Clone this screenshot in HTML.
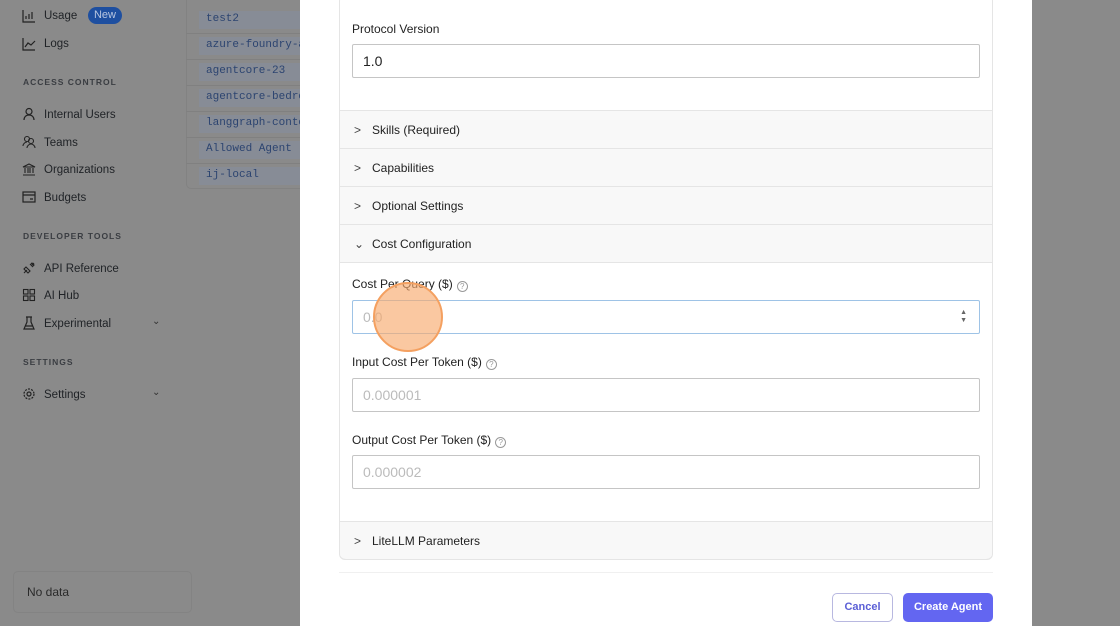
<!DOCTYPE html><html><head><meta charset="utf-8"><style>
*{box-sizing:border-box;margin:0;padding:0}
body{width:1120px;height:626px;overflow:hidden;position:relative;background:#8a8a8a;font-family:"Liberation Sans",sans-serif}
.a{position:absolute}
.nav{font-size:11.5px;color:#1f2226;left:44px;margin-top:1px}
.ic{left:22px;width:14px;height:14px}
.sec{font-size:8.5px;color:#3a3d42;letter-spacing:1px;left:23px;font-weight:bold}
.chip{left:199px;height:18px;background:#878c96;color:#2c4470;font-family:"Liberation Mono",monospace;font-size:11px;padding:2px 7px;width:110px;white-space:nowrap;overflow:hidden}
.rl{left:186px;width:114px;height:1px;background:#808080}
.lbl{font-size:12px;color:#222;left:352px}
.inp{left:352px;width:628px;border:1px solid #c5c5c5;border-radius:2px;background:#fff;font-size:14px;padding-left:10px;color:#bbb;display:flex;align-items:center}
.row{left:340px;width:652px;height:38px;background:#f8f8f8;border-top:1px solid #e5e5e5;font-size:12px;color:#222;padding-left:32px;line-height:38px}
.chev{position:absolute;left:14px;top:0;font-size:12px;color:#444}
.q{display:inline-block;width:11px;height:11px;border:1px solid #999;border-radius:50%;font-size:8px;text-align:center;line-height:9px;color:#999;vertical-align:-1px;margin-left:4px}
</style></head><body>
<svg class="a ic" style="top:9px" viewBox="0 0 14 14" fill="none" stroke="#222" stroke-width="1.2"><path d="M1 1v12h12M4 10V7M7 10V5M10 10V3"/></svg>
<div class="a nav" style="top:9px">Usage</div>
<div class="a" style="left:88px;top:7px;width:34px;height:17px;border-radius:9px;background:#1e4fa0;color:#b8c6e0;font-size:11px;text-align:center;line-height:17px">New</div>
<svg class="a ic" style="top:37px" viewBox="0 0 14 14" fill="none" stroke="#222" stroke-width="1.2"><path d="M1 1v12h12M3 10l3-4 3 2 4-4"/></svg>
<div class="a nav" style="top:37px">Logs</div>
<div class="a sec" style="top:77px">ACCESS CONTROL</div>
<svg class="a ic" style="top:107px" viewBox="0 0 14 14" fill="none" stroke="#222" stroke-width="1.2"><circle cx="7" cy="4.5" r="3"/><path d="M2 13c0-3 2-5 5-5s5 2 5 5"/></svg>
<div class="a nav" style="top:108px">Internal Users</div>
<svg class="a ic" style="top:135px" viewBox="0 0 14 14" fill="none" stroke="#222" stroke-width="1.1"><circle cx="5" cy="4" r="2.5"/><circle cx="9" cy="6" r="2.5"/><path d="M1 11c0-2 2-4 4-4M5 13c0-2 2-4 4-4s4 2 4 4"/></svg>
<div class="a nav" style="top:136px">Teams</div>
<svg class="a ic" style="top:162px" viewBox="0 0 14 14" fill="none" stroke="#222" stroke-width="1.1"><path d="M1 5l6-3 6 3zM3 6v5M6 6v5M8 6v5M11 6v5M1 13h12"/></svg>
<div class="a nav" style="top:163px">Organizations</div>
<svg class="a ic" style="top:190px" viewBox="0 0 14 14" fill="none" stroke="#222" stroke-width="1.2"><rect x="1" y="2" width="12" height="10"/><path d="M1 5h12M8 9h3"/></svg>
<div class="a nav" style="top:191px">Budgets</div>
<div class="a sec" style="top:231px">DEVELOPER TOOLS</div>
<svg class="a ic" style="top:261px" viewBox="0 0 14 14" fill="none" stroke="#222" stroke-width="1.1"><path d="M2 12l3-3M12 2L9 5M4 6l4 4-2 2-4-4zM8 4l2-2 2 2-2 2"/></svg>
<div class="a nav" style="top:262px">API Reference</div>
<svg class="a ic" style="top:288px" viewBox="0 0 14 14" fill="none" stroke="#222" stroke-width="1.1"><rect x="1.5" y="1.5" width="4.5" height="4.5"/><rect x="8" y="1.5" width="4.5" height="4.5"/><rect x="1.5" y="8" width="4.5" height="4.5"/><rect x="8" y="8" width="4.5" height="4.5"/></svg>
<div class="a nav" style="top:289px">AI Hub</div>
<svg class="a ic" style="top:316px" viewBox="0 0 14 14" fill="none" stroke="#222" stroke-width="1.2"><path d="M4 1h6M5 1v5l-3 7h10l-3-7V1M3.5 10h7"/></svg>
<div class="a nav" style="top:317px">Experimental</div>
<div class="a" style="left:152px;top:316px;font-size:10px;color:#333">&#8964;</div>
<div class="a sec" style="top:357px">SETTINGS</div>
<svg class="a ic" style="top:387px" viewBox="0 0 14 14" fill="none" stroke="#222" stroke-width="1.2"><circle cx="7" cy="7" r="2"/><circle cx="7" cy="7" r="5" stroke-dasharray="2 1.2"/></svg>
<div class="a nav" style="top:388px">Settings</div>
<div class="a" style="left:152px;top:387px;font-size:10px;color:#333">&#8964;</div>
<div class="a" style="left:13px;top:571px;width:179px;height:42px;border:1px solid #838383;border-radius:5px;font-size:12px;color:#2a2a2a;padding:13px 13px">No data</div>
<div class="a" style="left:186px;top:-5px;width:120px;height:194px;border:1px solid #828282;border-radius:5px"></div>
<div class="a rl" style="top:33px"></div><div class="a rl" style="top:59px"></div><div class="a rl" style="top:85px"></div><div class="a rl" style="top:111px"></div><div class="a rl" style="top:137px"></div><div class="a rl" style="top:163px"></div>
<div class="a chip" style="top:11px">test2</div>
<div class="a chip" style="top:37px">azure-foundry-agent</div>
<div class="a chip" style="top:63px">agentcore-23</div>
<div class="a chip" style="top:89px">agentcore-bedrock</div>
<div class="a chip" style="top:115px">langgraph-content</div>
<div class="a chip" style="top:141px">Allowed Agent</div>
<div class="a chip" style="top:167px">ij-local</div>
<div class="a" style="left:300px;top:0;width:732px;height:626px;background:#fff"></div>
<div class="a" style="left:339px;top:-5px;width:654px;height:565px;border:1px solid #e5e5e5;border-radius:6px;background:#fff;overflow:hidden"></div>
<div class="a lbl" style="top:22px">Protocol Version</div>
<div class="a inp" style="top:44px;height:34px;color:#222">1.0</div>
<div class="a row" style="top:110px"><span class="chev">&gt;</span>Skills (Required)</div>
<div class="a row" style="top:148px"><span class="chev">&gt;</span>Capabilities</div>
<div class="a row" style="top:186px"><span class="chev">&gt;</span>Optional Settings</div>
<div class="a row" style="top:224px;border-bottom:1px solid #e5e5e5;height:39px"><span class="chev">&#8964;</span>Cost Configuration</div>
<div class="a lbl" style="top:277px">Cost Per Query ($)<span class="q">?</span></div>
<div class="a inp" style="top:300px;height:34px;border-color:#9ec3e6">0.0<span style="position:absolute;right:12px;top:8px;font-size:7px;color:#666;line-height:8px">▲<br>▼</span></div>
<div class="a lbl" style="top:355px">Input Cost Per Token ($)<span class="q">?</span></div>
<div class="a inp" style="top:378px;height:34px">0.000001</div>
<div class="a lbl" style="top:433px">Output Cost Per Token ($)<span class="q">?</span></div>
<div class="a inp" style="top:455px;height:34px">0.000002</div>
<div class="a row" style="top:521px;border-radius:0 0 6px 6px;border-bottom:1px solid #e5e5e5;height:39px"><span class="chev">&gt;</span>LiteLLM Parameters</div>
<div class="a" style="left:339px;top:572px;width:654px;height:1px;background:#f0f0f0"></div>
<div class="a" style="left:373px;top:282px;width:70px;height:70px;border-radius:50%;background:rgba(248,170,110,.65);border:2px solid #f4a060"></div>
<div class="a" style="left:832px;top:593px;width:61px;height:29px;border:1px solid #b8b8e0;border-radius:5px;color:#5b5fd6;font-size:11px;text-align:center;line-height:27px;font-weight:bold">Cancel</div>
<div class="a" style="left:903px;top:593px;width:90px;height:29px;background:#6366f1;border-radius:5px;color:#fff;font-size:11px;text-align:center;line-height:29px;font-weight:bold">Create Agent</div>
</body></html>
